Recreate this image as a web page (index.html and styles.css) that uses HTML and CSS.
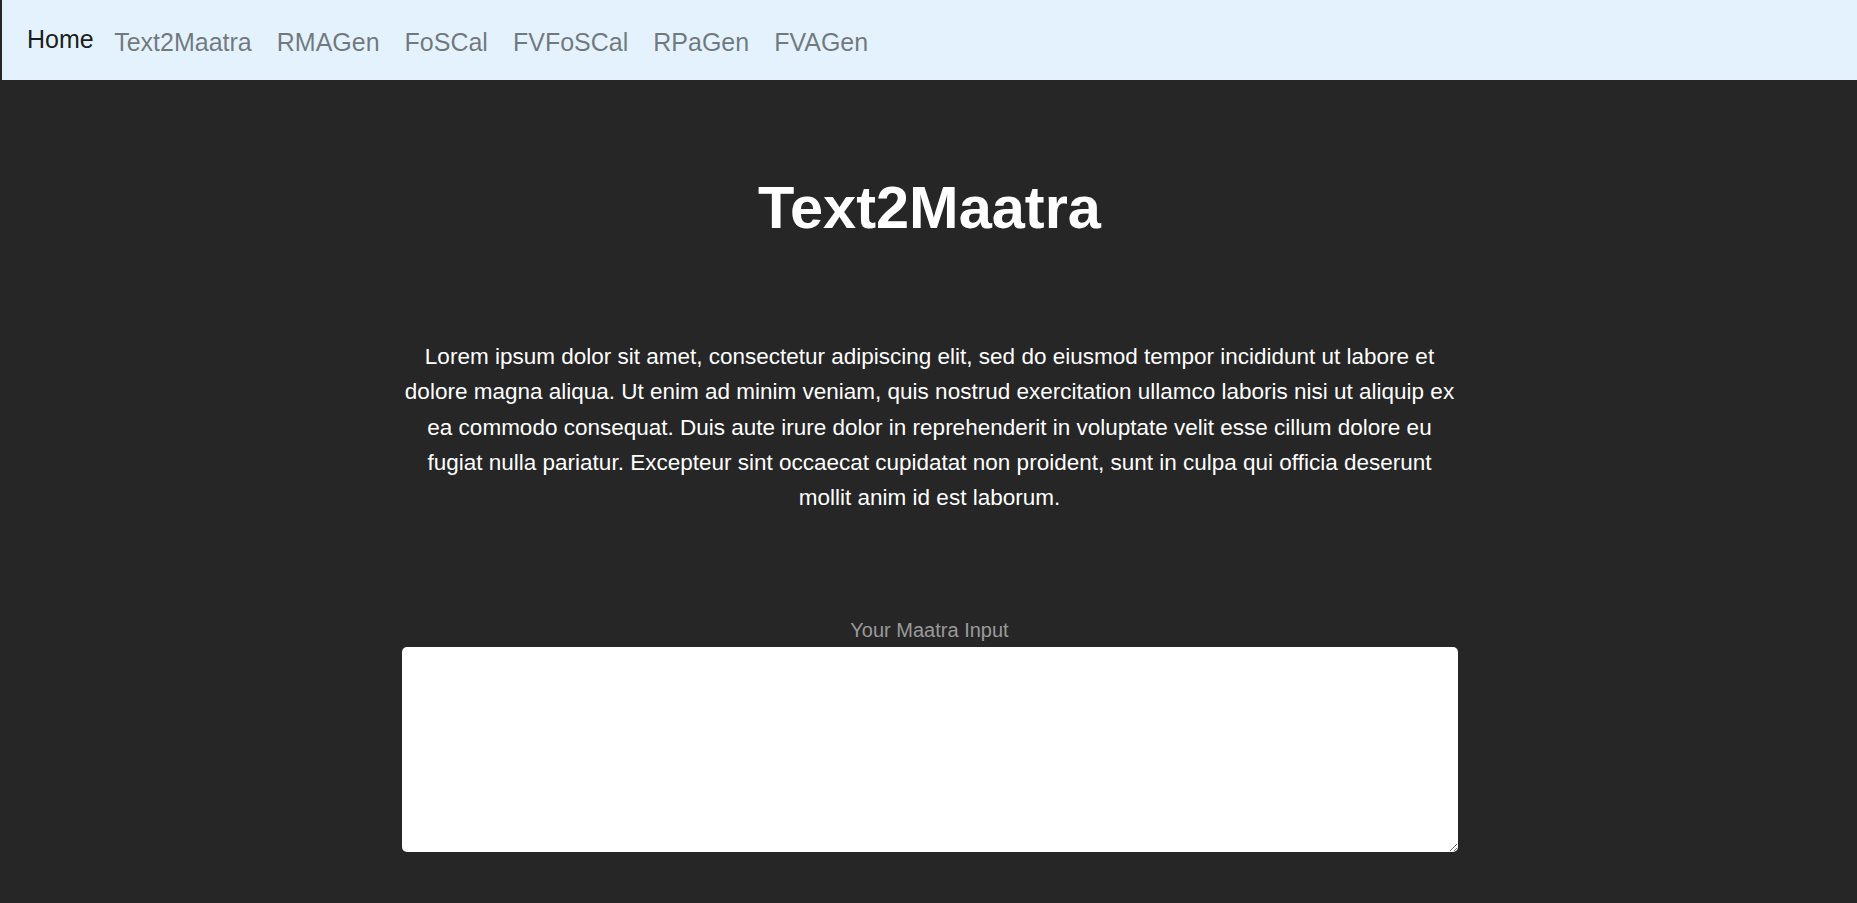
FILE: index.html
```html
<!DOCTYPE html>
<html lang="en">
<head>
<meta charset="utf-8">
<title>Text2Maatra</title>
<link rel="stylesheet" href="styles.css">
</head>
<body>
<nav class="navbar">
  <a class="brand" href="#">Home</a>
  <a class="nav-link" href="#">Text2Maatra</a>
  <a class="nav-link" href="#">RMAGen</a>
  <a class="nav-link" href="#">FoSCal</a>
  <a class="nav-link" href="#">FVFoSCal</a>
  <a class="nav-link" href="#">RPaGen</a>
  <a class="nav-link" href="#">FVAGen</a>
</nav>
<main class="main">
  <h1 class="title">Text2Maatra</h1>
  <p class="intro">Lorem ipsum dolor sit amet, consectetur adipiscing elit, sed do eiusmod tempor incididunt ut labore et dolore magna aliqua. Ut enim ad minim veniam, quis nostrud exercitation ullamco laboris nisi ut aliquip ex ea commodo consequat. Duis aute irure dolor in reprehenderit in voluptate velit esse cillum dolore eu fugiat nulla pariatur. Excepteur sint occaecat cupidatat non proident, sunt in culpa qui officia deserunt mollit anim id est laborum.</p>
  <label class="input-label" for="maatra">Your Maatra Input</label>
  <textarea id="maatra" class="input-area"></textarea>
</main>
</body>
</html>
```
FILE: styles.css
```css
html, body {
  margin: 0;
  padding: 0;
}
body {
  background: #262626;
  padding-left: 2px;
  min-height: 903px;
  box-sizing: border-box;
  font-family: "Liberation Sans", Arial, sans-serif;
  color: #ffffff;
}
.navbar {
  display: flex;
  align-items: center;
  height: 80px;
  background: #e3f2fd;
  padding-left: 25px;
  box-sizing: border-box;
}
.brand {
  font-size: 25px;
  line-height: 30px;
  color: rgba(0, 0, 0, 0.9);
  text-decoration: none;
  margin-right: 8px;
  padding-bottom: 2px;
}
.nav-link {
  font-size: 25px;
  line-height: 30px;
  color: rgba(0, 0, 0, 0.52);
  text-decoration: none;
  padding: 3px 12.5px 0;
}
.main {
  display: flex;
  flex-direction: column;
  align-items: center;
}
.title {
  margin: 93px 0 0;
  font-size: 59.5px;
  line-height: 70px;
  font-weight: bold;
}
.intro {
  margin: 96px 0 0;
  width: 1056px;
  text-align: center;
  font-size: 22.5px;
  line-height: 35.3px;
}
.input-label {
  margin-top: 103px;
  font-size: 20px;
  line-height: 24px;
  color: #9a9a9a;
}
.input-area {
  margin-top: 5px;
  width: 1056px;
  height: 205px;
  box-sizing: border-box;
  border: none;
  border-radius: 5px;
  background: #ffffff;
  padding: 8px;
  font-family: "Liberation Sans", Arial, sans-serif;
  font-size: 20px;
}
```
